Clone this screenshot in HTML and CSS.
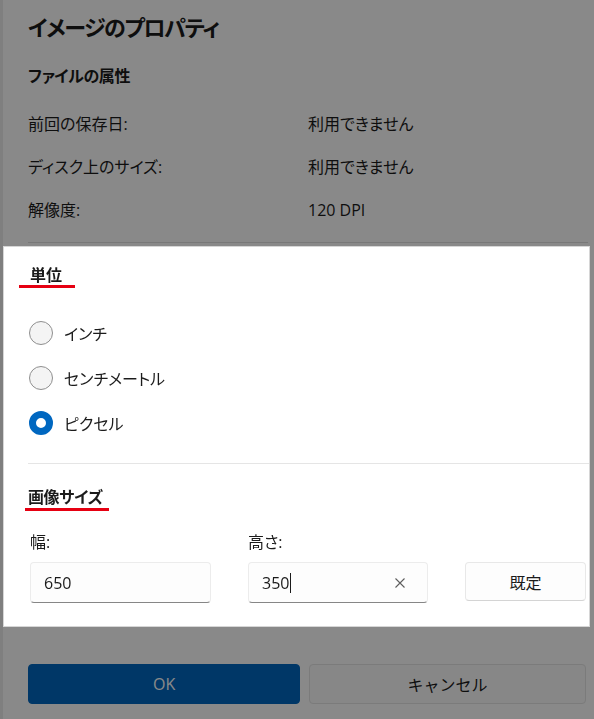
FILE: index.html
```html
<!DOCTYPE html>
<html lang="ja">
<head>
    <meta charset="UTF-8">
    <meta name="viewport" content="width=device-width, initial-scale=1.0">
    <title>イメージのプロパティ</title>
    <link rel="stylesheet" href="styles.css">
</head>
<body>
    <div class="dialog">
        <div class="head">
            <h1 class="title">イメージのプロパティ</h1>
            <h2 class="subtitle">ファイルの属性</h2>
            <div class="info">
                <div class="info-row"><span>前回の保存日:</span><span>利用できません</span></div>
                <div class="info-row"><span>ディスク上のサイズ:</span><span>利用できません</span></div>
                <div class="info-row"><span>解像度:</span><span>120 DPI</span></div>
            </div>
            <div class="rule"></div>
        </div>

        <div class="focus">
            <h3 class="mark">単位</h3>
            <div class="options">
                <label class="option"><input type="radio" name="unit" class="radio"> インチ</label>
                <label class="option"><input type="radio" name="unit" class="radio"> センチメートル</label>
                <label class="option"><input type="radio" name="unit" class="radio" checked> ピクセル</label>
            </div>

            <div class="separator"></div>

            <h3 class="mark mark-size">画像サイズ</h3>
            <div class="size-row">
                <div class="size-col col-w">
                    <div class="size-label">幅:</div>
                    <div class="field">650</div>
                </div>
                <div class="size-col col-h">
                    <div class="size-label">高さ:</div>
                    <div class="field"><span>350</span><span class="caret"></span>
                        <svg class="clear" width="10" height="10" viewBox="0 0 10 10">
                            <path d="M0.5 0.5 L9.5 9.5 M9.5 0.5 L0.5 9.5" stroke="#5d5d5d" stroke-width="1.1" fill="none"/>
                        </svg>
                    </div>
                </div>
                <button class="btn-reset">既定</button>
            </div>
        </div>

        <div class="actions">
            <button class="btn btn-primary">OK</button>
            <button class="btn btn-cancel">キャンセル</button>
        </div>
    </div>

    <!-- capa oscura sobre el diálogo, la sección .focus queda encima -->
    <div class="dim"></div>
</body>
</html>
```

FILE: styles.css
```css
body {
    margin: 0;
    width: 594px;
    height: 719px;
    overflow: hidden;
    background-color: #fff;
    font-family: "Open Sans", "Noto Sans CJK JP", sans-serif;
    font-feature-settings: "palt";
    color: #1b1b1b;
}

.dialog {
    height: 719px;
    border-left: 3px solid #ececec;
    background-color: #fff;
}

.head {
    padding: 12px 6px 0 25px;
}

.title {
    margin: 0;
    font-size: 22px;
    font-weight: 600;
    line-height: 30px;
    letter-spacing: -1.4px;
}

.subtitle {
    margin: 22px 0 0;
    font-size: 16px;
    font-weight: 700;
    line-height: 24px;
    letter-spacing: -0.4px;
}

.info {
    display: flex;
    flex-direction: column;
    gap: 19px;
    margin-top: 24px;
}

.info-row {
    display: grid;
    grid-template-columns: 280px 1fr;
    font-size: 16px;
    line-height: 24px;
}

.rule {
    height: 1px;
    margin-top: 20px;
    background-color: #e0e0e0;
}

/* seccion resaltada */
.focus {
    position: relative;
    z-index: 2;
    margin: 4px 5px 0 1px;
    padding: 17px 0 23px 26px;
    background-color: #fff;
    box-shadow: 0 0 0 1px #d6d6d6;
}

.mark {
    display: inline-block;
    margin: 0 0 0 -11px;
    padding: 0 13px 0 11px;
    font-size: 16px;
    font-weight: 700;
    line-height: 20px;
    border-bottom: 3px solid #e60012;
}

.mark-size {
    margin: 23px 0 0 -5px;
    padding: 0 6px 1px 3px;
    letter-spacing: -0.4px;
}

.options {
    display: flex;
    flex-direction: column;
    margin-top: 22px;
}

.option {
    display: flex;
    align-items: center;
    gap: 11px;
    height: 45px;
    font-size: 16px;
}

.radio {
    appearance: none;
    box-sizing: border-box;
    width: 24px;
    height: 24px;
    margin: 0 0 0 -1px;
    border: 1px solid #8f8f8f;
    border-radius: 50%;
    background-color: #f4f4f4;
}

.radio:checked {
    border: 7px solid #0067c0;
    background-color: #fff;
}

.separator {
    height: 1px;
    margin: 18px 0 0 -2px;
    background-color: #e5e5e5;
}

.size-row {
    display: flex;
    align-items: flex-end;
    margin-top: 21px;
}

.size-col {
    display: flex;
    flex-direction: column;
    gap: 10px;
}

.col-w {
    width: 181px;
}

.col-h {
    width: 180px;
    margin-left: 37px;
}

.size-label {
    font-size: 16px;
    line-height: 20px;
}

.field {
    display: flex;
    align-items: center;
    box-sizing: border-box;
    height: 41px;
    padding: 0 12px 0 13px;
    border: 1px solid #ececec;
    border-bottom-color: #868686;
    border-radius: 4px;
    background-color: #fdfdfd;
    font-size: 16px;
}

.caret {
    width: 1px;
    height: 20px;
    margin-left: 1px;
    background-color: #1b1b1b;
}

.clear {
    margin-left: auto;
    margin-right: 10px;
}

.btn-reset {
    box-sizing: border-box;
    width: 121px;
    height: 39px;
    margin: 0 0 2px 37px;
    border: 1px solid #e8e8e8;
    border-bottom-color: #d4d4d4;
    border-radius: 4px;
    background-color: #fdfdfd;
    font-family: inherit;
    font-size: 16px;
    color: #1b1b1b;
}

.actions {
    display: flex;
    gap: 9px;
    margin-top: 38px;
    padding: 0 8px 0 25px;
}

.btn {
    height: 40px;
    border: 1px solid #e5e5e5;
    border-radius: 4px;
    background-color: #fbfbfb;
    font-family: inherit;
    font-size: 16px;
    color: #1b1b1b;
}

.btn-primary {
    flex: 272;
    border-color: #0067c0;
    background-color: #0067c0;
    color: #fff;
}

.btn-cancel {
    flex: 277;
}

.dim {
    position: fixed;
    top: 0;
    left: 0;
    right: 0;
    bottom: 0;
    z-index: 1;
    background-color: rgba(0, 0, 0, 0.463);
}
```
